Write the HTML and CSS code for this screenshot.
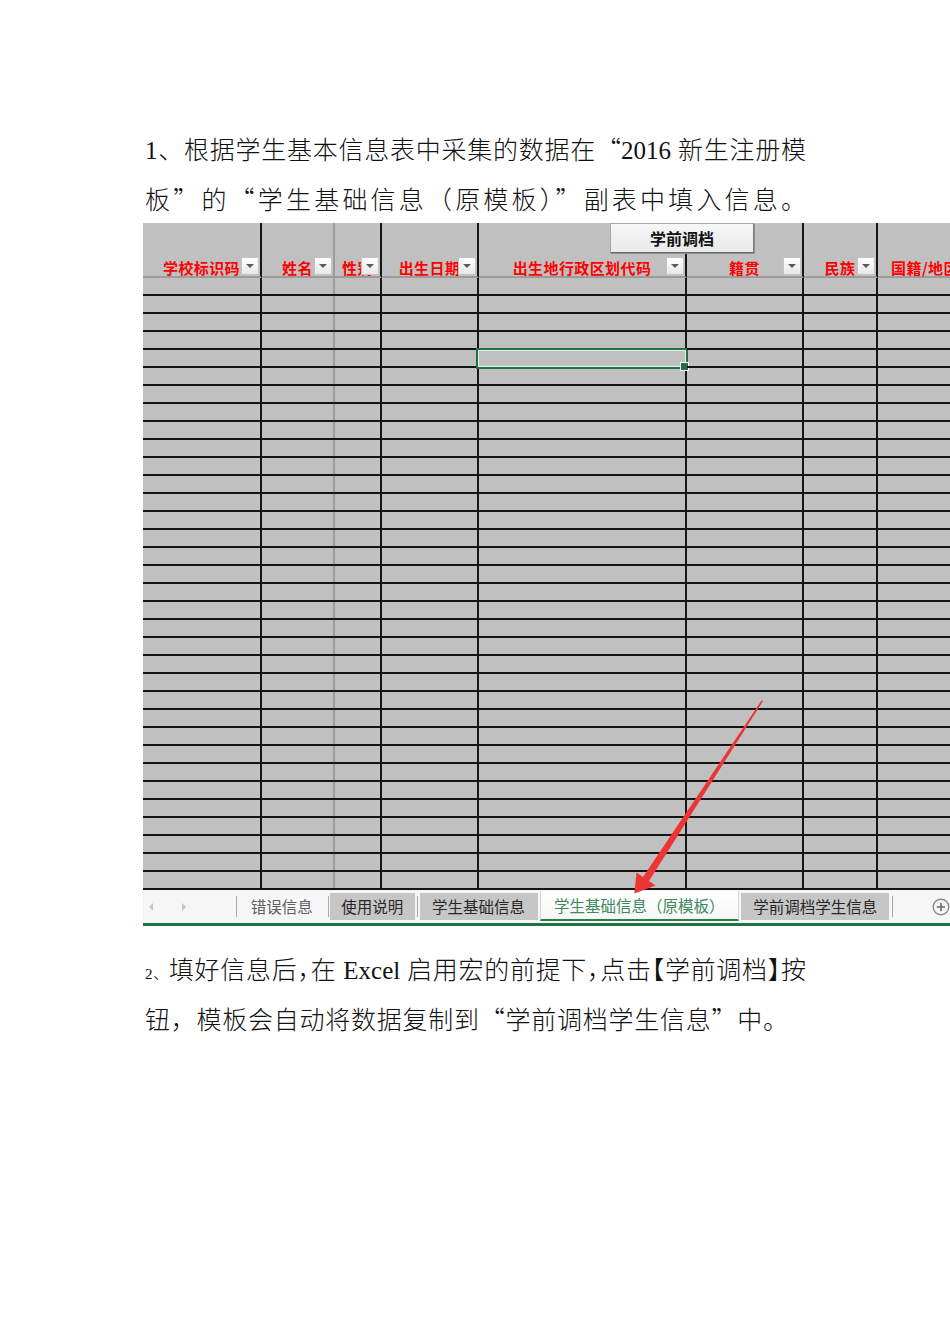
FILE: index.html
```html
<!DOCTYPE html>
<html lang="zh-CN">
<head>
<meta charset="utf-8">
<title>学前调档说明</title>
<link rel="stylesheet" href="styles.css">
</head>
<body>
<main class="page">
  <p class="para p1">
    <span class="line first">1、根据学生基本信息表中采集的数据在<span class="q">“</span>2016 新生注册模</span>
    <span class="line second">板<span class="q">”</span>的<span class="q">“</span>学生基础信息（原模板）<span class="q">”</span>副表中填入信息。</span>
  </p>

  <figure class="sheet">
    <div class="sheet-head">
      <div class="hcell">学校标识码<span class="dd"></span></div>
      <div class="hcell soft">姓名<span class="dd"></span></div>
      <div class="hcell">性别<span class="dd"></span></div>
      <div class="hcell">出生日期<span class="dd"></span></div>
      <div class="hcell">出生地行政区划代码<span class="dd"></span></div>
      <div class="hcell">籍贯<span class="dd"></span></div>
      <div class="hcell">民族<span class="dd"></span></div>
      <div class="hcell">国籍/地区<span class="dd"></span></div>
      <button class="macro-btn" type="button">学前调档</button>
    </div>
    <div class="sheet-body">
      <div class="col"></div>
      <div class="col soft"></div>
      <div class="col"></div>
      <div class="col"></div>
      <div class="col"><div class="sel"></div></div>
      <div class="col"></div>
      <div class="col"></div>
      <div class="col"></div>
    </div>
    <div class="tabs">
      <div class="nav"><span class="arr arr-l"></span><span class="arr arr-r"></span></div>
      <span class="sep"></span>
      <div class="tab plain">错误信息</div>
      <span class="sep s1"></span>
      <div class="tab gray t1">使用说明</div>
      <span class="sep s2"></span>
      <div class="tab gray t2">学生基础信息</div>
      <div class="tab active">学生基础信息（原模板）</div>
      <div class="tab gray t3">学前调档学生信息</div>
      <span class="sep s3"></span>
      <svg class="plus" width="18" height="18" viewBox="0 0 18 18">
        <circle cx="9" cy="9" r="7.8" fill="none" stroke="#8a8a8a" stroke-width="1.4"/>
        <path d="M9 4.8v8.4M4.8 9h8.4" stroke="#6a6a6a" stroke-width="1.6"/>
      </svg>
    </div>
  </figure>

  <p class="para p2">
    <span class="line"><span class="num">2、</span>填好信息后<span class="half">，</span>在 Excel 启用宏的前提下<span class="half">，</span>点击<span class="half">【</span>学前调档<span class="half">】</span>按</span>
    <span class="line short">钮，模板会自动将数据复制到<span class="q">“</span>学前调档学生信息<span class="q">”</span>中。</span>
  </p>

  <svg class="arrow" width="950" height="1344" viewBox="0 0 950 1344">
    <polygon points="763,701 649,881 655.5,885.5 634.3,893.5 636.5,872.5 643,877 761.5,700.5" fill="#ee3434"/>
  </svg>
</main>
</body>
</html>
```

FILE: styles.css
```css
* {
  box-sizing: border-box;
}

html,
body {
  margin: 0;
  background: #fff;
}

body {
  font-family: "Liberation Serif", "Noto Sans CJK SC", serif;
  color: #111;
}

.page {
  position: relative;
  width: 950px;
  height: 1344px;
  overflow: hidden;
  padding-top: 125px;
}

/* ---------- paragraphs ---------- */
.para {
  margin: 0 0 0 145px;
  width: 661px;
  font-size: 25px;
  font-weight: 300;
  line-height: 49px;
}

.line {
  display: block;
  width: 661px;
  height: 49px;
  text-align: justify;
  text-align-last: justify;
}

.p1 .first {
  height: 48px;
  padding-top: 2px;
  line-height: 48px;
}

.p1 .second {
  height: 50px;
  padding-top: 3px;
  line-height: 50px;
}

.line.short {
  width: 643px;
}

.q {
  font-family: "Noto Sans CJK SC", sans-serif;
  line-height: 1;
}

.p2 {
  margin-top: 19px;
  line-height: 50px;
}

.p2 .line {
  height: 50px;
  padding-top: 1px;
}

.num {
  font-size: 15px;
  line-height: 1;
}

.half {
  font-family: "Noto Sans CJK SC", sans-serif;
  font-feature-settings: "halt" 1;
  line-height: 1;
}

/* ---------- spreadsheet ---------- */
.sheet {
  position: relative;
  margin: 0 0 0 143px;
  width: 807px;
  height: 703px;
  overflow: hidden;
  font-family: "Noto Sans CJK SC", sans-serif;
}

.sheet-head,
.sheet-body {
  display: grid;
  grid-template-columns: 119px 73px 47px 97px 208px 117px 74px 96px;
  width: 831px;
  background: #c0c0c0;
}

.sheet-head {
  position: relative;
  height: 55px;
}

.hcell {
  position: relative;
  display: flex;
  justify-content: center;
  align-items: flex-end;
  border-right: 2px solid #161616;
  border-bottom: 2px solid #9c9c9c;
  color: #ff0000;
  font-size: 15px;
  font-weight: 700;
  line-height: 16px;
  letter-spacing: 0.4px;
  white-space: nowrap;
}

.hcell.soft {
  border-right-color: #9c9c9c;
}

.dd {
  position: absolute;
  right: 1px;
  bottom: 1px;
  width: 18px;
  height: 18px;
  background: linear-gradient(#ffffff, #e8e8e8);
  border: 1px solid #c4c4c4;
}

.dd::after {
  content: "";
  position: absolute;
  left: 4px;
  top: 6px;
  border-left: 4px solid transparent;
  border-right: 4px solid transparent;
  border-top: 4px solid #5a5a5a;
}

.macro-btn {
  position: absolute;
  left: 467px;
  top: 0;
  width: 144px;
  height: 30px;
  margin: 0;
  padding: 0;
  border: 1px solid #a8a8a8;
  border-right-color: #7c7c7c;
  border-bottom-color: #6c6c6c;
  background: linear-gradient(#f7f7f7, #e9e9e9);
  box-shadow: 1px 1px 0 #8e8e8e;
  font-family: "Noto Sans CJK SC", sans-serif;
  font-size: 16px;
  font-weight: 700;
  color: #111;
  line-height: 28px;
  z-index: 2;
}

.sheet-body {
  height: 612px;
}

.col {
  --vline: #161616;
  position: relative;
  background:
    repeating-linear-gradient(to bottom, transparent 0 16px, #141414 16px 18px),
    linear-gradient(to left, var(--vline) 0 2px, transparent 2px);
}

.col.soft {
  --vline: #9c9c9c;
}

.sel {
  position: absolute;
  left: -3px;
  top: 70px;
  width: 212px;
  height: 21px;
  border: 2px solid #217346;
  box-shadow: inset 0 0 0 1px #e4f3e8;
}

.sel::after {
  content: "";
  position: absolute;
  right: -3px;
  bottom: -4px;
  width: 7px;
  height: 7px;
  background: #217346;
  border: 1px solid #fff;
}

/* ---------- sheet tabs ---------- */
.tabs {
  display: flex;
  align-items: center;
  height: 36px;
  background: #f6f6f6;
  border-bottom: 3px solid #217346;
  font-size: 15.5px;
  color: #262626;
  white-space: nowrap;
}

.nav {
  display: flex;
  align-items: center;
  width: 93px;
  height: 100%;
  padding-left: 6px;
  gap: 29px;
}

.arr {
  width: 0;
  height: 0;
  border-top: 4px solid transparent;
  border-bottom: 4px solid transparent;
}

.arr-l {
  border-right: 4px solid #c4c4c4;
}

.arr-r {
  border-left: 4px solid #c4c4c4;
}

.sep {
  width: 1px;
  height: 21px;
  background: #a9a9a9;
}

.sep.s1 {
  margin-left: 1px;
}

.sep.s2 {
  margin-left: 2px;
}

.sep.s3 {
  margin-left: 3px;
}

.tab {
  display: flex;
  justify-content: center;
  align-items: center;
  height: 27px;
  line-height: 27px;
}

.tab.plain {
  width: 90px;
  color: #5f5f5f;
}

.tab.gray {
  background: #c6c6c6;
}

.tab.t1 {
  width: 85px;
  margin-left: 1px;
}

.tab.t2 {
  width: 118px;
  margin-left: 2px;
}

.tab.t3 {
  width: 148px;
  margin-left: 3px;
}

.tab.active {
  align-self: flex-start;
  height: 30px;
  width: 200px;
  margin-top: 1px;
  margin-left: 2px;
  padding-top: 1px;
  background: linear-gradient(#ffffff, #f7f7f7);
  border-left: 1px solid #d6d6d6;
  border-right: 1px solid #d6d6d6;
  border-bottom: 2px solid #2f7d4f;
  color: #3a8a5c;
}

.tab.active + .tab.t3 {
  margin-left: 2px;
}

.plus {
  margin-left: 39px;
}

/* ---------- annotation arrow ---------- */
.arrow {
  position: absolute;
  left: 0;
  top: 0;
  pointer-events: none;
}
```
